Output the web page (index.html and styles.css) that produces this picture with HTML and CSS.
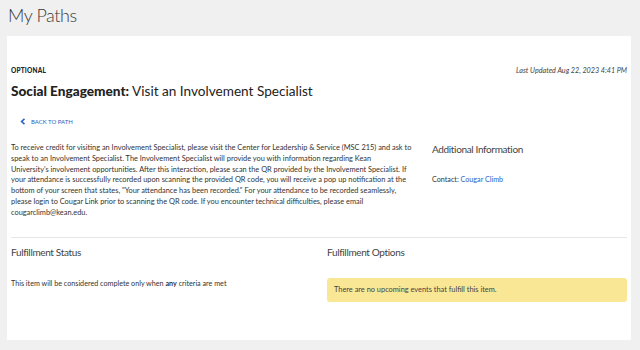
FILE: index.html
```html
<!DOCTYPE html>
<html>
<head>
	<title>My Paths</title>
	<meta charset="utf-8">
	<link rel="stylesheet" href="styles.css">
</head>
<body>
	<h1 class="page-title">My Paths</h1>
	<div class="card">
		<div class="meta">
			<span class="tag">OPTIONAL</span>
			<span class="updated">Last Updated Aug 22, 2023 4:41 PM</span>
		</div>
		<h2 class="item-title"><b>Social Engagement:</b> Visit an Involvement Specialist</h2>
		<a class="back" href="#">
			<svg width="6" height="7" viewBox="0 0 6 7"><path d="M4.5 0.8 L1.6 3.5 L4.5 6.2" fill="none" stroke="#2c63c4" stroke-width="1.6"/></svg>
			BACK TO PATH
		</a>
		<div class="top-row">
			<p class="desc">To receive credit for visiting an Involvement Specialist, please visit the Center for Leadership &amp; Service (MSC 215) and ask to<br>
			speak to an Involvement Specialist. The Involvement Specialist will provide you with information regarding Kean<br>
			University's involvement opportunities. After this interaction, please scan the QR provided by the Involvement Specialist. If<br>
			your attendance is successfully recorded upon scanning the provided QR code, you will receive a pop up notification at the<br>
			bottom of your screen that states, "Your attendance has been recorded." For your attendance to be recorded seamlessly,<br>
			please login to Cougar Link prior to scanning the QR code. If you encounter technical difficulties, please email<br>
			cougarclimb@kean.edu.</p>
			<div class="side">
				<h3 class="sub">Additional Information</h3>
				<p class="contact">Contact: <a href="#">Cougar Climb</a></p>
			</div>
		</div>
		<div class="bottom-row">
			<div>
				<h3 class="sub">Fulfillment Status</h3>
				<p class="status">This item will be considered complete only when <b>any</b> criteria are met</p>
			</div>
			<div>
				<h3 class="sub">Fulfillment Options</h3>
				<div class="notice">There are no upcoming events that fulfill this item.</div>
			</div>
		</div>
	</div>
</body>
</html>
```

FILE: styles.css
```css
body{
	margin: 0;
	padding: 0 9px 0 7px;
	background: #f0f0f0;
	font-family: "Lato", "Liberation Sans", sans-serif;
	color: #333;
}
.page-title{
	margin: 0;
	padding: 4px 0 0 1px;
	height: 32px;
	font-size: 18px;
	font-weight: 300;
	letter-spacing: -0.4px;
	color: #3a3a3a;
}
.card{
	background: #fff;
	height: 304px;
	padding: 0 4px 0 4px;
	box-sizing: border-box;
}
.meta{
	display: flex;
	justify-content: space-between;
	align-items: center;
	padding-top: 30px;
}
.tag{
	font-size: 6.5px;
	font-weight: 900;
	color: #222;
	letter-spacing: 0.2px;
}
.updated{
	font-size: 7.2px;
	font-style: italic;
	color: #444;
}
.item-title{
	margin: 8px 0 0 0;
	font-size: 13.6px;
	font-weight: 400;
	color: #222;
}
.item-title b{
	font-weight: 900;
}
.back{
	display: flex;
	align-items: center;
	gap: 5px;
	margin: 19px 0 0 9px;
	font-size: 6px;
	color: #2c63c4;
	text-decoration: none;
}
.top-row{
	display: grid;
	grid-template-columns: 411px 1fr;
	gap: 10px;
	margin-top: 18px;
}
.desc{
	margin: 0;
	font-size: 7.4px;
	line-height: 10.8px;
	white-space: nowrap;
	color: #333;
}
.sub{
	margin: 0;
	font-size: 10px;
	font-weight: 400;
	letter-spacing: -0.35px;
	color: #444;
}
.contact{
	margin: 20px 0 0 0;
	font-size: 7.2px;
}
.contact a{
	color: #2c63c4;
	text-decoration: none;
}
.bottom-row{
	display: grid;
	grid-template-columns: 1fr 1fr;
	gap: 16px;
	margin-top: 18px;
	border-top: 1px solid #e6e6e6;
	padding-top: 8px;
}
.status{
	margin: 21px 0 0 0;
	font-size: 7.2px;
}
.notice{
	margin-top: 20px;
	background: #f9e796;
	border-radius: 3px;
	padding: 0 7px;
	height: 24px;
	line-height: 24px;
	font-size: 7.4px;
	color: #444;
}
```
